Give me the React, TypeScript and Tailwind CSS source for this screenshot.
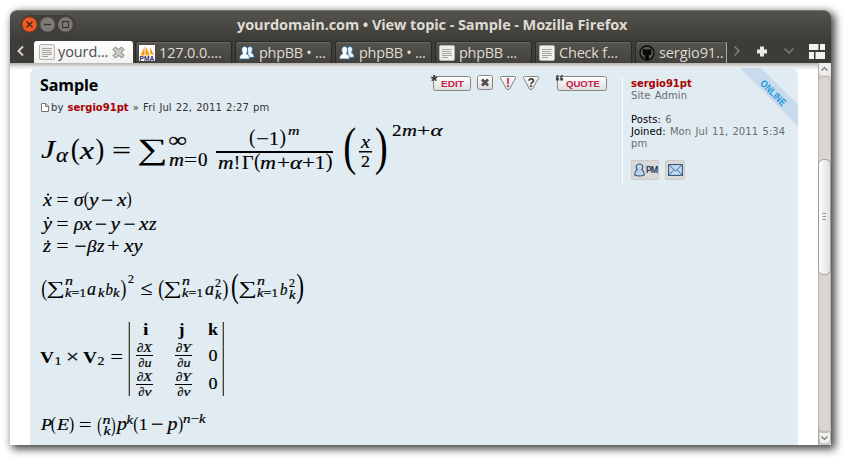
import type { ReactNode } from 'react';

type GlyphProps = { x: number; y: number; w: number; s: number; children: string; roman?: boolean; bold?: boolean };

function G({ x, y, w, s, children, roman, bold }: GlyphProps) {
  return (
    <text
      x={x}
      y={y}
      textLength={w}
      lengthAdjust="spacingAndGlyphs"
      fontSize={s}
      fontStyle={roman || bold ? 'normal' : 'italic'}
      fontWeight={bold ? 700 : 400}
      stroke="#000"
      strokeWidth={bold ? 0 : 0.2}
    >
      {children}
    </text>
  );
}

// A delimiter stretched to fill the box x, y, w, h.
function D({ x, y, w, h, children }: { x: number; y: number; w: number; h: number; children: string }) {
  const left = children === '(' ? 0.048 : 0.029;
  return (
    <text
      transform={`translate(${x} ${y}) scale(${w / (0.256 * 20)} ${h / (0.87 * 20)})`}
      x={-left * 20}
      y={0.676 * 20}
      fontSize={20}
    >
      {children}
    </text>
  );
}

function Sum({ x, y, w, h }: { x: number; y: number; w: number; h: number }) {
  return (
    <text transform={`translate(${x} ${y}) scale(${w / 11.6} ${h / 17.4})`} x={-1.4} y={13.6} fontSize={20}>
      ∑
    </text>
  );
}

function Formula({ top, height, children }: { top: number; height: number; children: ReactNode }) {
  return (
    <svg
      width={420}
      height={height}
      viewBox={`40 ${top} 420 ${height}`}
      className="block shrink-0 overflow-visible fill-black font-['Liberation_Serif',serif]"
    >
      {children}
    </svg>
  );
}

function Bessel() {
  return (
    <Formula top={116} height={64}>
      <G x={41} y={158} w={14} s={25}>J</G>
      <G x={56} y={162} w={12} s={20}>α</G>
      <D x={72} y={139} w={7} h={26}>(</D>
      <G x={80} y={158.5} w={14} s={26}>x</G>
      <D x={96} y={139} w={7} h={26}>)</D>
      <G x={112} y={159} w={19} s={26} roman>=</G>
      <Sum x={140} y={139} w={25} h={26} />
      <G x={168} y={147} w={19} s={21} roman>∞</G>
      <G x={169} y={166} w={15} s={18.5}>m</G>
      <G x={184} y={166} w={13} s={18.5} roman>=</G>
      <G x={198} y={166} w={9.5} s={18.5} roman>0</G>
      <D x={250} y={130} w={5} h={18}>(</D>
      <G x={256} y={145} w={13} s={18.5} roman>−</G>
      <G x={269} y={145} w={10} s={18.5} roman>1</G>
      <D x={280} y={130} w={5} h={18}>)</D>
      <G x={288} y={135} w={11.5} s={13}>m</G>
      <rect x={216} y={151} width={117} height={2} />
      <G x={218} y={169} w={15.5} s={18.5}>m</G>
      <G x={234} y={169} w={6} s={18.5} roman>!</G>
      <G x={242} y={169} w={11.5} s={18.5} roman>Γ</G>
      <D x={255} y={154} w={5} h={18}>(</D>
      <G x={260} y={169} w={16} s={18.5}>m</G>
      <G x={277} y={169} w={13} s={18.5} roman>+</G>
      <G x={290} y={169} w={12} s={18.5}>α</G>
      <G x={302} y={169} w={13} s={18.5} roman>+</G>
      <G x={315} y={169} w={10} s={18.5} roman>1</G>
      <D x={326} y={154} w={5.5} h={18}>)</D>
      <D x={345} y={129} w={10} h={45}>(</D>
      <G x={361} y={147.5} w={9} s={18.5}>x</G>
      <rect x={359} y={151} width={13} height={1.5} />
      <G x={361} y={167} w={9} s={17} roman>2</G>
      <D x={376} y={129} w={10} h={45}>)</D>
      <G x={392} y={136.3} w={9.5} s={17.5} roman>2</G>
      <G x={402} y={136.3} w={15} s={17.5}>m</G>
      <G x={417} y={136.3} w={13} s={17.5} roman>+</G>
      <G x={430.5} y={136.3} w={12} s={17.5}>α</G>
    </Formula>
  );
}

function Lorenz() {
  return (
    <Formula top={180} height={88}>
      <G x={43} y={205.5} w={9} s={18}>x</G>
      <circle cx={48} cy={194.5} r={1.1} />
      <G x={56.5} y={205.5} w={12} s={18} roman>=</G>
      <G x={74} y={205.5} w={9.5} s={18}>σ</G>
      <D x={84.5} y={192.5} w={4} h={16.5}>(</D>
      <G x={89} y={205.5} w={9.5} s={18}>y</G>
      <G x={101} y={205.5} w={12} s={18} roman>−</G>
      <G x={117} y={205.5} w={9.5} s={18}>x</G>
      <D x={127} y={192.5} w={4} h={16.5}>)</D>

      <G x={43} y={229.5} w={9} s={18}>y</G>
      <circle cx={48} cy={218} r={1.1} />
      <G x={56.5} y={229.5} w={12} s={18} roman>=</G>
      <G x={74} y={229.5} w={9} s={18}>ρ</G>
      <G x={82.5} y={229.5} w={9.5} s={18}>x</G>
      <G x={95} y={229.5} w={12} s={18} roman>−</G>
      <G x={110.5} y={229.5} w={9.5} s={18}>y</G>
      <G x={123.5} y={229.5} w={12} s={18} roman>−</G>
      <G x={139} y={229.5} w={9.5} s={18}>x</G>
      <G x={149} y={229.5} w={7.5} s={18}>z</G>

      <G x={43} y={252} w={8} s={18}>z</G>
      <circle cx={48} cy={241.5} r={1.1} />
      <G x={56.5} y={252} w={12} s={18} roman>=</G>
      <G x={74.5} y={252} w={12} s={18} roman>−</G>
      <G x={87} y={252} w={9.5} s={17}>β</G>
      <G x={97} y={252} w={7.5} s={18}>z</G>
      <G x={107} y={252} w={12.5} s={18} roman>+</G>
      <G x={124} y={252} w={9.5} s={18}>x</G>
      <G x={133.5} y={252} w={9} s={18}>y</G>
    </Formula>
  );
}

function SumTo({ x }: { x: number }) {
  return (
    <g>
      <Sum x={x} y={281.5} w={15} h={16} />
      <G x={x + 17} y={285} w={8} s={13}>n</G>
      <G x={x + 17} y={296.5} w={6.5} s={12}>k</G>
      <G x={x + 23.5} y={296.5} w={8} s={12} roman>=</G>
      <G x={x + 31.5} y={296.5} w={6.5} s={12} roman>1</G>
    </g>
  );
}

function Cauchy() {
  return (
    <Formula top={268} height={44}>
      <D x={42} y={280} w={4.5} h={20}>(</D>
      <SumTo x={48} />
      <G x={87} y={294.5} w={9} s={18}>a</G>
      <G x={98} y={296.5} w={6.5} s={12.5}>k</G>
      <G x={105.5} y={294.5} w={7.5} s={17}>b</G>
      <G x={113} y={296.5} w={6.5} s={12.5}>k</G>
      <D x={121} y={280} w={4.5} h={20}>)</D>
      <G x={128} y={283} w={6} s={12} roman>2</G>
      <G x={140.5} y={295} w={12} s={20} roman>≤</G>
      <D x={159} y={280} w={4.5} h={20}>(</D>
      <SumTo x={165} />
      <G x={205} y={294.5} w={9} s={18}>a</G>
      <G x={215} y={287} w={6} s={12} roman>2</G>
      <G x={215} y={298.5} w={6.5} s={12}>k</G>
      <D x={223} y={280} w={4.5} h={20}>)</D>
      <D x={232} y={275} w={6} h={28.5}>(</D>
      <SumTo x={240} />
      <G x={280} y={294.5} w={7.5} s={17}>b</G>
      <G x={289} y={287} w={6} s={12} roman>2</G>
      <G x={289} y={298.5} w={6.5} s={12}>k</G>
      <D x={297} y={275} w={6} h={28.5}>)</D>
    </Formula>
  );
}

function Partial({ x, y, top, bottom }: { x: number; y: number; top: string; bottom: string }) {
  return (
    <g>
      <G x={x + 1} y={y - 3} w={6.5} s={12.5}>∂</G>
      <G x={x + 7} y={y - 3} w={9} s={12.5}>{top}</G>
      <rect x={x} y={y} width={17} height={1} />
      <G x={x + 2.5} y={y + 12} w={6} s={12.5}>∂</G>
      <G x={x + 8.5} y={y + 12} w={7} s={12.5}>{bottom}</G>
    </g>
  );
}

function CrossProduct() {
  return (
    <Formula top={312} height={93}>
      <G x={40} y={362.5} w={14} s={16} bold>V</G>
      <G x={54.5} y={365} w={7} s={12.5} roman>1</G>
      <G x={66} y={363} w={13} s={19} roman>×</G>
      <G x={83} y={362.5} w={14} s={16} bold>V</G>
      <G x={97.5} y={365} w={7} s={12.5} roman>2</G>
      <G x={110.5} y={363} w={12.5} s={18} roman>=</G>
      <rect x={128} y={322} width={1} height={74} fill="#b9b583" />
      <rect x={129} y={322} width={1} height={74} fill="#3c4060" />
      <G x={143} y={334.5} w={5.5} s={16.5} bold>i</G>
      <G x={178.5} y={334.5} w={6} s={16.5} bold>j</G>
      <G x={208} y={334.5} w={10} s={16.5} bold>k</G>
      <Partial x={136} y={355} top="X" bottom="u" />
      <Partial x={175} y={355} top="Y" bottom="u" />
      <G x={208.5} y={360.5} w={9} s={17} roman>0</G>
      <Partial x={136} y={384} top="X" bottom="v" />
      <Partial x={175} y={384} top="Y" bottom="v" />
      <G x={208.5} y={389} w={9} s={17} roman>0</G>
      <rect x={222} y={322} width={1} height={74} fill="#b9b583" />
      <rect x={223} y={322} width={1} height={74} fill="#3c4060" />
    </Formula>
  );
}

function Binomial() {
  return (
    <Formula top={405} height={40}>
      <G x={41} y={430} w={11} s={17}>P</G>
      <D x={51.5} y={417} w={4} h={17}>(</D>
      <G x={57} y={430} w={12} s={17}>E</G>
      <D x={69.5} y={417} w={4} h={17}>)</D>
      <G x={79} y={430.5} w={12.5} s={18} roman>=</G>
      <D x={98} y={417} w={3.5} h={19}>(</D>
      <G x={102.5} y={424} w={8} s={12.5}>n</G>
      <G x={103.5} y={435} w={7} s={12}>k</G>
      <D x={111.5} y={417} w={3.5} h={19}>)</D>
      <G x={117} y={430} w={10} s={18}>p</G>
      <G x={126.5} y={424} w={6.5} s={12.5}>k</G>
      <D x={134} y={417} w={4} h={17}>(</D>
      <G x={139} y={430} w={8.5} s={17.5} roman>1</G>
      <G x={151} y={430} w={12.5} s={18} roman>−</G>
      <G x={167.5} y={430} w={10} s={18}>p</G>
      <D x={178.5} y={417} w={4} h={17}>)</D>
      <G x={183} y={422.5} w={7.5} s={12.5}>n</G>
      <G x={190.5} y={422.5} w={8.5} s={12.5} roman>−</G>
      <G x={199} y={422.5} w={6.5} s={12.5}>k</G>
    </Formula>
  );
}

function PageIcon() {
  return (
    <svg width="16" height="16" viewBox="0 0 16 16" className="shrink-0">
      <rect x=".5" y=".5" width="15" height="15" rx="1.5" fill="#f0efec" stroke="#b4b2ad" />
      <path d="M3 4.5h10M3 6.5h9M3 8.5h10M3 10.5h10M3 12.5h6" stroke="#9b9b98" strokeWidth=".9" />
    </svg>
  );
}

function PmaIcon() {
  return (
    <svg width="16" height="16" viewBox="0 0 16 16" className="shrink-0">
      <rect width="16" height="16" fill="#fff" />
      <path d="M1.500 10.500 5.500 2v8.500zM6.500 10.500V1l4.500 9.500zM11 8.500V2l4 8.500z" fill="#f79a0c" />
      <text x=".5" y="15.800" textLength="15" lengthAdjust="spacingAndGlyphs" fontSize="7" className="fill-[#2f2f66] font-['Liberation_Sans',sans-serif] font-bold">PMA</text>
    </svg>
  );
}

function PeopleIcon() {
  return (
    <svg width="16" height="16" viewBox="0 0 16 16" className="shrink-0">
      <g fill="#e4f1fa" stroke="#2b6f9e" strokeWidth=".8">
        <path d="M8.500 4.500C8 .5 14 .5 13.500 4.500c0 1.500-1 2.500-.8 3.500 2 .8 2.300 2 2.300 4.500H9z" />
        <path d="M2.800 5C2.300 .3 9 .3 8.500 5c0 2-1.200 3-1 4 2.500.7 3 2.500 3 5h-10c0-2.500.6-4.300 3-5 .2-1-.7-2-.7-4z" fill="#fff" />
      </g>
    </svg>
  );
}

function GithubIcon() {
  return (
    <svg width="16" height="16" viewBox="0 0 16 16" className="shrink-0">
      <circle cx="8" cy="8" r="7" fill="#5c5b56" stroke="#090909" strokeWidth="1.300" />
      <path d="M4 3.500 6 4.500h4l2-1 .3 2.500c.9 3-.6 4.300-2.800 4.500.6 1 .5 2.500.5 4H6.200v-2C4.500 12.700 4.300 12 3.300 11.200c1 0 1.500 1 3 .6l.3-1.300C4.200 10.300 3 9 3.700 6z" fill="#050505" />
    </svg>
  );
}

function Tab({ icon, label, tracking, last = false }: { icon: ReactNode; label: string; tracking: string; last?: boolean }) {
  return (
    <div
      className={`mr-[3px] flex h-[22px] shrink-0 items-center rounded-t-[3px] border border-b-0 border-[#292926] bg-linear-to-b from-[#55534d] to-[#42413c] pl-[3px] shadow-[inset_0_1px_0_#6a6962] ${last ? 'w-[92px] border-r-[#aaa9a5]' : 'w-[97px]'}`}
    >
      {icon}
      <span className={`ml-[4px] whitespace-nowrap text-[14.5px] leading-[20px] text-[#dfdbd2] ${tracking}`}>{label}</span>
    </div>
  );
}

function WindowButton({ kind }: { kind: 'close' | 'min' | 'max' }) {
  const close = kind === 'close';
  return (
    <svg width="18" height="18" viewBox="0 0 18 18" className="shrink-0">
      <circle cx="8.500" cy="8.500" r="7.500" fill={close ? '#ea5b25' : '#7d7b74'} stroke={close ? '#9b3510' : '#55534d'} />
      {close && <path d="m5.500 5.500 6 6m0-6-6 6" stroke="#4c2616" strokeWidth="1.400" />}
      {kind === 'min' && <path d="M5 8.500h7" stroke="#34332f" strokeWidth="1.300" />}
      {kind === 'max' && <rect x="5.500" y="5.500" width="6" height="6" fill="none" stroke="#34332f" strokeWidth="1.200" />}
    </svg>
  );
}

function TitleBar() {
  return (
    <div className="flex h-[30px] items-center rounded-t-[7px] border-t border-[#77756e] bg-linear-to-b from-[#55534d] to-[#3d3c38] pb-[2px] pl-[10px]">
      <div className="flex h-[20px] w-[56px] items-center rounded-full bg-[#3f3e3a] pl-[1px]">
        <WindowButton kind="close" />
        <WindowButton kind="min" />
        <WindowButton kind="max" />
      </div>
      <div className="ml-[161px] whitespace-nowrap text-[14.5px] leading-[20px] font-bold tracking-[-0.08px] text-[#dfdbd2]">
        yourdomain.com • View topic - Sample - Mozilla Firefox
      </div>
    </div>
  );
}

function TabBar() {
  return (
    <div className="flex h-[23px] items-end bg-[#3d3c38]">
      <svg width="24" height="22" viewBox="0 0 24 22" className="shrink-0">
        <path d="m13 5.500-4.500 4.500 4.500 4.500" fill="none" stroke="#d6d2ca" strokeWidth="2" />
      </svg>
      <div className="mr-[2px] flex h-[22px] w-[99px] shrink-0 items-center rounded-t-[3px] bg-linear-to-b from-white to-[#f2f1f0] pl-[5px]">
        <PageIcon />
        <span className="ml-[3px] w-[54px] whitespace-nowrap text-[14.5px] leading-[20px] tracking-[-0.1px] text-[#4c4c4c]">yourd...</span>
        <svg width="13" height="13" viewBox="0 0 13 13" className="shrink-0">
          <path d="m3.500 1 3 2.600L9.500 1 12 3.500 9.400 6.500 12 9.500 9.500 12l-3-2.600L3.500 12 1 9.500l2.600-3L1 3.500z" fill="#c8c6c2" stroke="#7f7e7a" strokeLinejoin="round" />
        </svg>
      </div>
      <Tab icon={<PmaIcon />} label="127.0.0...." tracking="tracking-[-0.15px]" />
      <Tab icon={<PeopleIcon />} label="phpBB • ..." tracking="tracking-[-0.3px]" />
      <Tab icon={<PeopleIcon />} label="phpBB • ..." tracking="tracking-[-0.3px]" />
      <Tab icon={<PageIcon />} label="phpBB ..." tracking="tracking-[-0.3px]" />
      <Tab icon={<PageIcon />} label="Check f..." tracking="tracking-[-0.2px]" />
      <Tab icon={<GithubIcon />} label="sergio91.." tracking="tracking-[-0.1px]" last />
      <svg width="98" height="22" viewBox="0 0 98 22" className="shrink-0">
        <path d="m4.500 5.500 4.500 4.500-4.500 4.500" fill="none" stroke="#7f7d76" strokeWidth="1.700" />
        <path d="M32 5.500v10M27 10.500h10" stroke="#ebe9e4" strokeWidth="4" />
        <path d="m54.500 7.500 4.500 4.500 4.500-4.500" fill="none" stroke="#77756e" strokeWidth="1.700" />
        <g fill="#f4f2ee">
          <rect x="79" y="3" width="9.500" height="6" />
          <rect x="90" y="3" width="5" height="6" />
          <rect x="79" y="11" width="5" height="7" />
          <rect x="85.500" y="11" width="9.500" height="7" />
        </g>
      </svg>
    </div>
  );
}

function PostButtons() {
  return (
    <svg width="178" height="20" viewBox="430 72 178 20" className="shrink-0 font-['Liberation_Sans',sans-serif] font-bold">
      <defs>
        <linearGradient id="face" x1="0" y1="0" x2="0" y2="1">
          <stop offset="0" stopColor="#ffffff" />
          <stop offset="1" stopColor="#dcdcdc" />
        </linearGradient>
      </defs>
      <g fill="url(#face)" stroke="#858585">
        <rect x="433.500" y="76.500" width="37" height="14" rx="2" />
        <rect x="477.500" y="75.500" width="15" height="14" rx="2" />
        <path d="M501.500 76.500h13q1.500 0 1 1.500l-6 11q-1.500 1.500-3 0l-6-11q-.5-1.500 1-1.500z" />
        <path d="M524.500 76.500h13q1.500 0 1 1.500l-6 11q-1.500 1.500-3 0l-6-11q-.5-1.500 1-1.500z" />
        <rect x="557.500" y="76.500" width="49" height="14" rx="2" />
      </g>
      <text x="430.800" y="87" fontSize="17" fill="#3a3a3a">*</text>
      <text x="441" y="87" fontSize="9.700" textLength="23" lengthAdjust="spacingAndGlyphs" fill="#c8204a">EDIT</text>
      <path d="m482 79.500 6 6m0-6-6 6" stroke="#4e4e4e" strokeWidth="2.800" />
      <text x="506" y="87" fontSize="12" fill="#c8204a">!</text>
      <text x="527.500" y="86.500" fontSize="12" fill="#3a3a3a">?</text>
      <text x="554.500" y="88.500" fontSize="20" textLength="10" lengthAdjust="spacingAndGlyphs" fill="#3a3a3a">“</text>
      <text x="566" y="87" fontSize="9.700" textLength="34" lengthAdjust="spacingAndGlyphs" fill="#c8204a">QUOTE</text>
    </svg>
  );
}

function Profile() {
  return (
    <aside className="mt-[10px] flex h-[105px] w-[176px] flex-col border-l border-white pl-[8px] text-[10px] leading-[12px] tracking-[0.08px] text-[#6b6b6b] [word-spacing:1px]">
      <div className="whitespace-nowrap font-bold tracking-[-0.03px] text-[#aa0000]">sergio91pt</div>
      <div className="whitespace-nowrap">Site Admin</div>
      <div className="mt-[12px] whitespace-nowrap"><span className="text-black">Posts:</span> 6</div>
      <div className="whitespace-nowrap"><span className="text-black">Joined:</span> Mon Jul 11, 2011 5:34</div>
      <div>pm</div>
      <div className="mt-[10px] flex shrink-0 gap-[6px]">
        <div className="flex h-[20px] w-[28px] items-center rounded-[2px] border border-[#cdcbc7] bg-[#dad9d7] pl-[2px]">
          <svg width="11" height="14" viewBox="0 0 11 14">
            <path d="M3.300 6.500C1 4 2.500 1 5.500 1s4.500 3 2.200 5.500C10 8 10.500 10 10.300 12q-4.800 2-9.600 0C.5 10 1 8 3.300 6.500z" fill="#bcd3ee" stroke="#34567f" strokeWidth="1.100" />
          </svg>
          <span className="ml-[1px] font-['Roboto',sans-serif] text-[8.500px] font-bold tracking-[-0.7px] text-[#253c5e]">PM</span>
        </div>
        <div className="flex h-[20px] w-[20px] items-center justify-center rounded-[2px] border border-[#cdcbc7] bg-[#dad9d7]">
          <svg width="15" height="12" viewBox="0 0 15 12">
            <rect x=".6" y=".6" width="13.800" height="10.800" fill="#c3daf2" stroke="#34567f" strokeWidth="1.100" />
            <path d="m1 1 6.500 6L14 1M1 11l4.500-5M14 11 9.500 6" fill="none" stroke="#46699a" />
          </svg>
        </div>
      </div>
    </aside>
  );
}

function Scrollbar() {
  return (
    <svg width="13" height="382" viewBox="818 63 13 382" className="shrink-0">
      <defs>
        <linearGradient id="thumb">
          <stop offset="0" stopColor="#ffffff" />
          <stop offset="1" stopColor="#e2e0dd" />
        </linearGradient>
      </defs>
      <rect x="818" y="63" width="13" height="382" fill="#d9d6d2" />
      <path d="M818.500 63v382" stroke="#aaa8a4" />
      <rect x="819" y="58.500" width="11.500" height="17" rx="4" fill="#efedeb" />
      <rect x="818.500" y="76.500" width="12" height="355" rx="5" fill="#d9d6d2" stroke="#b7b4b0" />
      <path d="M819 431c1 2 10 2 11.500 0v9q-1 4-4 4h-4q-3 0-3.500-4z" fill="#f2f1ef" stroke="#b0aeaa" />
      <rect x="818.500" y="159.500" width="12" height="115" rx="5" fill="url(#thumb)" stroke="#9c9a96" />
      <path d="M822.500 213.500h3.500M822.500 216.500h3.500M822.500 219.500h3.500" stroke="#96948f" />
      <path d="m821.500 70.500 3-3 3 3M821.500 436.500l3 3 3-3" fill="none" stroke="#77756f" strokeWidth="1.200" />
    </svg>
  );
}

export default function App() {
  return (
    <div className="h-[461px] w-[847px] overflow-hidden bg-white pt-[10px] pl-[10px] font-['DejaVu_Sans',sans-serif]">
      <div className="flex h-[435px] w-[821px] flex-col rounded-t-[7px] shadow-[3px_3px_9px_1px_rgba(0,0,0,0.75)]">
        <div className="font-['Open_Sans',sans-serif]">
          <TitleBar />
          <TabBar />
        </div>
        <main className="flex h-[382px] justify-between overflow-hidden bg-white bg-linear-to-b from-[#b5b2b0] via-[#e8e8e8] via-[4px] to-white to-[7px]">
          <article className="mt-[5px] ml-[20px] flex h-[377px] w-[768px] overflow-hidden rounded-t-[7px] bg-[#e1ebf2]">
            <section className="flex w-[592px] flex-col pl-[10px]">
              <header className="flex h-[30px] items-start justify-between pr-[14px]">
                <h3 className="pt-[7px] font-['Open_Sans',sans-serif] text-[16px] leading-[20px] font-bold tracking-[-0.1px] text-black">Sample</h3>
                <div className="pt-[4px]"><PostButtons /></div>
              </header>
              <p className="flex h-[18px] items-center whitespace-nowrap pt-[1px] text-[10px] tracking-[0.08px] text-[#333333] [word-spacing:0.9px]">
                <svg width="11" height="11" viewBox="0 0 11 11" className="shrink-0">
                  <path d="M1.500 1.500h4.500l2.500 2.500v5.500h-7zM5.500 1.500V4.500h3" fill="#fff" stroke="#77777a" />
                </svg>
                <span>by <b className="tracking-[0px] text-[#aa0000]">sergio91pt</b> » Fri Jul 22, 2011 2:27 pm</span>
              </p>
              <Bessel />
              <Lorenz />
              <Cauchy />
              <CrossProduct />
              <Binomial />
            </section>
            <div className="relative w-[176px]">
              <Profile />
              <svg width="58" height="58" viewBox="0 0 58 58" className="absolute top-0 right-0">
                <path d="M0 0h21l37 37v21z" fill="#c8daeb" />
                <text
                  transform="translate(19.500 16) rotate(45)"
                  fontSize="10"
                  textLength="32"
                  lengthAdjust="spacingAndGlyphs"
                  className="fill-[#1f9be0] font-['Liberation_Sans',sans-serif] font-bold"
                >
                  ONLINE
                </text>
              </svg>
            </div>
          </article>
          <Scrollbar />
        </main>
      </div>
    </div>
  );
}
